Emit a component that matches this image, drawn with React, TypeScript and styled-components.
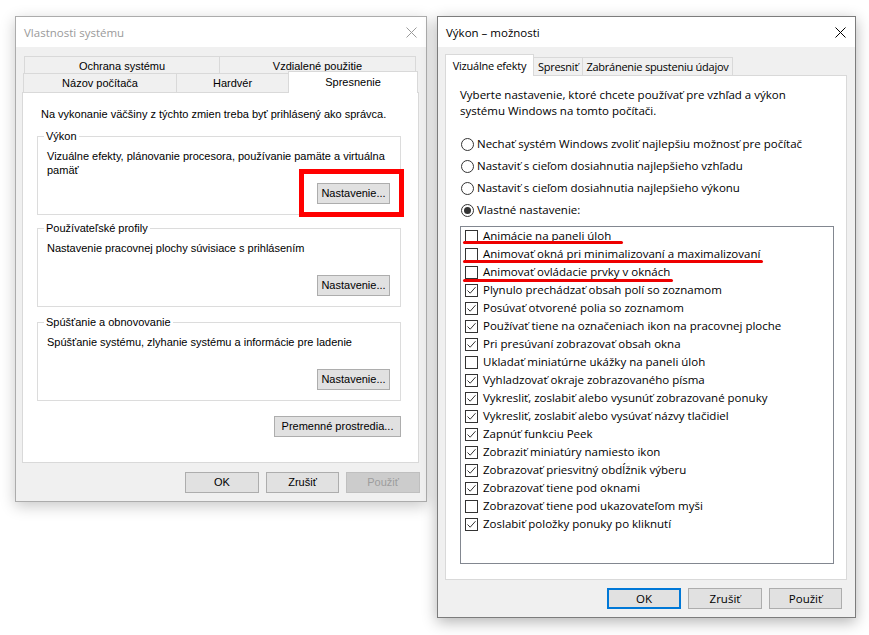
import React from 'react';
import styled, { createGlobalStyle, css } from 'styled-components';

const Global = createGlobalStyle`
  html, body { margin: 0; padding: 0; background: #ffffff; overflow: hidden; }
  body { font-family: "Liberation Sans", Arial, sans-serif; }
`;

const Desktop = styled.div`
  box-sizing: border-box;
  width: 869px;
  height: 635px;
  display: flex;
  align-items: flex-start;
  gap: 10px;
  padding: 16px 0 0 15px;
`;

const Window = styled.div<{ $w: number; $h: number; $active?: boolean }>`
  box-sizing: border-box;
  width: ${(p) => p.$w}px;
  height: ${(p) => p.$h}px;
  flex: none;
  display: flex;
  flex-direction: column;
  background: #f0f0f0;
  border: 1px solid ${(p) => (p.$active ? '#7c7c7c' : '#acacac')};
  box-shadow: 0 4px 14px rgba(0, 0, 0, ${(p) => (p.$active ? 0.3 : 0.22)});
`;

const TitleBar = styled.div<{ $active?: boolean }>`
  height: 30px;
  flex: none;
  background: #ffffff;
  display: flex;
  align-items: center;
  justify-content: space-between;
  padding: 0 9px 0 8px;
  font: 11.5px "Open Sans", "Noto Sans", sans-serif;
  color: ${(p) => (p.$active ? '#000000' : '#9a9a9a')};
`;

const Body = styled.div<{ $ui: 'classic' | 'modern' }>`
  flex: 1;
  display: flex;
  flex-direction: column;
  padding: ${(p) => (p.$ui === 'classic' ? '9px 6px 0 6px' : '7px 7px 0 7px')};
  color: #000;
  ${(p) =>
    p.$ui === 'classic'
      ? css`font: 11px/13px "Liberation Sans", Arial, sans-serif;`
      : css`font: 11.5px/16px "Open Sans", "Noto Sans", sans-serif;`}
`;

const TabStrip = styled.div`
  display: flex;
  flex-direction: column;
`;

const TabRow = styled.div<{ $h: number; $indent: number }>`
  display: flex;
  align-items: flex-end;
  height: ${(p) => p.$h}px;
  padding-left: ${(p) => p.$indent}px;
`;

const Tab = styled.div<{ $w: number; $h: number; $selected?: boolean; $dy?: number; $tight?: boolean }>`
  box-sizing: border-box;
  flex: none;
  width: ${(p) => p.$w}px;
  height: ${(p) => p.$h}px;
  border: 1px solid #d9d9d9;
  border-bottom: none;
  background: ${(p) => (p.$selected ? '#ffffff' : '#f0f0f0')};
  display: flex;
  align-items: center;
  justify-content: center;
  padding-top: ${(p) => p.$dy ?? 0}px;
  white-space: nowrap;
  ${(p) =>
    p.$tight &&
    css`
      font-size: 11px;
      letter-spacing: -0.25px;
    `}
  & + & {
    margin-left: -1px;
  }
  ${(p) =>
    p.$selected &&
    css`
      position: relative;
      z-index: 1;
      margin-bottom: -1px;
    `}
`;

const Panel = styled.div<{ $w: number; $h: number; $pad: string }>`
  box-sizing: border-box;
  width: ${(p) => p.$w}px;
  height: ${(p) => p.$h}px;
  flex: none;
  background: #ffffff;
  border: 1px solid #d9d9d9;
  display: flex;
  flex-direction: column;
  padding: ${(p) => p.$pad};
`;

const Intro = styled.p<{ $ml: number }>`
  margin: 0 0 0 ${(p) => p.$ml}px;
`;

const Group = styled.fieldset<{ $mt: number }>`
  margin: ${(p) => p.$mt}px 0 0 0;
  padding: 0 10px 10px 9px;
  border: 1px solid #dcdcdc;
  min-width: 0;
`;

const Legend = styled.legend`
  padding: 0 2px;
  margin-left: -3px;
  line-height: 13px;
`;

const GroupBody = styled.div`
  height: 55px;
  padding-top: 6px;
  display: flex;
  flex-direction: column;
  justify-content: space-between;
`;

const GroupText = styled.div`
  line-height: 14px;
`;

const RightAlign = styled.div<{ $mt?: number }>`
  display: flex;
  justify-content: flex-end;
  margin-top: ${(p) => p.$mt ?? 0}px;
`;

const Highlight = styled.span`
  position: relative;
  display: inline-flex;
  &::after {
    content: '';
    position: absolute;
    top: -14px;
    right: -14px;
    bottom: -13px;
    left: -18px;
    border: 5px solid #ff0000;
    pointer-events: none;
  }
`;

const Button = styled.button<{ $w: number; $isDefault?: boolean }>`
  box-sizing: border-box;
  flex: none;
  width: ${(p) => p.$w}px;
  height: 21px;
  padding: 0;
  margin: 0;
  font: inherit;
  line-height: 1;
  color: #000;
  background: #e1e1e1;
  border: 1px solid #adadad;
  border-radius: 0;
  ${(p) =>
    p.$isDefault &&
    css`
      border: 2px solid #0078d7;
    `}
  &:disabled {
    background: #cccccc;
    border-color: #bfbfbf;
    color: #9d9d9d;
  }
`;

const Footer = styled.div<{ $pt: number; $pr: number }>`
  display: flex;
  justify-content: flex-end;
  gap: 7px;
  padding: ${(p) => p.$pt}px ${(p) => p.$pr}px 0 0;
`;

const RadioGroup = styled.div`
  display: flex;
  flex-direction: column;
  margin-top: 14px;
`;

const RadioRow = styled.label`
  display: flex;
  align-items: center;
  height: 22px;
  gap: 3px;
  padding-left: 1px;
  white-space: nowrap;
`;

const RadioCircle = styled.span<{ $checked?: boolean }>`
  box-sizing: border-box;
  width: 13px;
  height: 13px;
  flex: none;
  border-radius: 50%;
  border: 1px solid #333333;
  background: #ffffff;
  display: inline-flex;
  align-items: center;
  justify-content: center;
  &::after {
    content: '';
    width: 7px;
    height: 7px;
    border-radius: 50%;
    background: #333333;
    display: ${(p) => (p.$checked ? 'block' : 'none')};
  }
`;

const ListBox = styled.div`
  box-sizing: border-box;
  width: 374px;
  height: 338px;
  margin-top: 5px;
  border: 1px solid #828790;
  background: #ffffff;
  display: flex;
  flex-direction: column;
`;

const ListRow = styled.div`
  position: relative;
  display: flex;
  align-items: center;
  height: 18px;
  flex: none;
  gap: 5px;
  padding-left: 4px;
  white-space: nowrap;
`;

const CheckBox = styled.span`
  box-sizing: border-box;
  width: 13px;
  height: 13px;
  flex: none;
  border: 1px solid #333333;
  background: #ffffff;
  display: inline-flex;
  align-items: center;
  justify-content: center;
`;

const Underline = styled.span<{ $w: number; $top: number }>`
  position: absolute;
  left: 2px;
  top: ${(p) => p.$top}px;
  width: ${(p) => p.$w}px;
  height: 3px;
  border-radius: 2px;
  background: #ee0000;
`;

const CloseIcon = ({ color }: { color: string }) => (
  <svg width="11" height="11" viewBox="0 0 11 11" aria-hidden>
    <path d="M0.5 0.5L10.5 10.5M10.5 0.5L0.5 10.5" stroke={color} strokeWidth="1" fill="none" />
  </svg>
);

const CheckMark = () => (
  <svg width="11" height="11" viewBox="0 0 11 11" aria-hidden>
    <path d="M1.5 5.5L4.2 8.2L9.5 2.2" stroke="#333333" strokeWidth="1" fill="none" />
  </svg>
);

const items: { label: string; checked: boolean; underline?: number; top?: number }[] = [
  { label: 'Animácie na paneli úloh', checked: false, underline: 160, top: 14 },
  { label: 'Animovať okná pri minimalizovaní a maximalizovaní', checked: false, underline: 300, top: 15 },
  { label: 'Animovať ovládacie prvky v oknách', checked: false, underline: 210, top: 16 },
  { label: 'Plynulo prechádzať obsah polí so zoznamom', checked: true },
  { label: 'Posúvať otvorené polia so zoznamom', checked: true },
  { label: 'Používať tiene na označeniach ikon na pracovnej ploche', checked: true },
  { label: 'Pri presúvaní zobrazovať obsah okna', checked: true },
  { label: 'Ukladať miniatúrne ukážky na paneli úloh', checked: false },
  { label: 'Vyhladzovať okraje zobrazovaného písma', checked: true },
  { label: 'Vykresliť, zoslabiť alebo vysunúť zobrazované ponuky', checked: true },
  { label: 'Vykresliť, zoslabiť alebo vysúvať názvy tlačidiel', checked: true },
  { label: 'Zapnúť funkciu Peek', checked: true },
  { label: 'Zobraziť miniatúry namiesto ikon', checked: true },
  { label: 'Zobrazovať priesvitný obdĺžnik výberu', checked: true },
  { label: 'Zobrazovať tiene pod oknami', checked: true },
  { label: 'Zobrazovať tiene pod ukazovateľom myši', checked: false },
  { label: 'Zoslabiť položky ponuky po kliknutí', checked: true },
];

const radios = [
  { label: 'Nechať systém Windows zvoliť najlepšiu možnosť pre počítač', checked: false },
  { label: 'Nastaviť s cieľom dosiahnutia najlepšieho vzhľadu', checked: false },
  { label: 'Nastaviť s cieľom dosiahnutia najlepšieho výkonu', checked: false },
  { label: 'Vlastné nastavenie:', checked: true },
];

export default function App() {
  return (
    <>
      <Global />
      <Desktop>
        <Window $w={412} $h={486}>
          <TitleBar>
            <span>Vlastnosti systému</span>
            <CloseIcon color="#9a9a9a" />
          </TitleBar>
          <Body $ui="classic">
            <TabStrip>
              <TabRow $h={17} $indent={2}>
                <Tab $w={196} $h={17} $dy={2}>Ochrana systému</Tab>
                <Tab $w={197} $h={17} $dy={2}>Vzdialené použitie</Tab>
              </TabRow>
              <TabRow $h={19} $indent={1}>
                <Tab $w={154} $h={19} $dy={1}>Názov počítača</Tab>
                <Tab $w={113} $h={19} $dy={1}>Hardvér</Tab>
                <Tab $w={130} $h={22} $selected>Spresnenie</Tab>
              </TabRow>
            </TabStrip>
            <Panel $w={397} $h={371} $pad="15px 17px 0 14px">
              <Intro $ml={4}>Na vykonanie väčšiny z týchto zmien treba byť prihlásený ako správca.</Intro>
              <Group $mt={9}>
                <Legend>Výkon</Legend>
                <GroupBody>
                  <GroupText>
                    Vizuálne efekty, plánovanie procesora, používanie pamäte a virtuálna
                    <br />
                    pamäť
                  </GroupText>
                  <RightAlign>
                    <Highlight>
                      <Button $w={73}>Nastavenie...</Button>
                    </Highlight>
                  </RightAlign>
                </GroupBody>
              </Group>
              <Group $mt={7}>
                <Legend>Používateľské profily</Legend>
                <GroupBody>
                  <GroupText>Nastavenie pracovnej plochy súvisiace s prihlásením</GroupText>
                  <RightAlign>
                    <Button $w={73}>Nastavenie...</Button>
                  </RightAlign>
                </GroupBody>
              </Group>
              <Group $mt={9}>
                <Legend>Spúšťanie a obnovovanie</Legend>
                <GroupBody>
                  <GroupText>Spúšťanie systému, zlyhanie systému a informácie pre ladenie</GroupText>
                  <RightAlign>
                    <Button $w={73}>Nastavenie...</Button>
                  </RightAlign>
                </GroupBody>
              </Group>
              <RightAlign $mt={15}>
                <Button $w={127}>Premenné prostredia...</Button>
              </RightAlign>
            </Panel>
            <Footer $pt={9} $pr={0}>
              <Button $w={74}>OK</Button>
              <Button $w={73}>Zrušiť</Button>
              <Button $w={74} disabled>
                Použiť
              </Button>
            </Footer>
          </Body>
        </Window>

        <Window $w={419} $h={602} $active>
          <TitleBar $active>
            <span>Výkon – možnosti</span>
            <CloseIcon color="#000000" />
          </TitleBar>
          <Body $ui="modern">
            <TabRow $h={21} $indent={0}>
              <Tab $w={89} $h={22} $selected $tight>
                Vizuálne efekty
              </Tab>
              <Tab $w={50} $h={18} $dy={1} $tight>
                Spresniť
              </Tab>
              <Tab $w={151} $h={18} $dy={1} $tight>
                Zabránenie spusteniu údajov
              </Tab>
            </TabRow>
            <Panel $w={402} $h={505} $pad="11px 0 0 14px">
              <Intro $ml={0}>
                Vyberte nastavenie, ktoré chcete používať pre vzhľad a výkon
                <br />
                systému Windows na tomto počítači.
              </Intro>
              <RadioGroup>
                {radios.map((r) => (
                  <RadioRow key={r.label}>
                    <RadioCircle $checked={r.checked} />
                    {r.label}
                  </RadioRow>
                ))}
              </RadioGroup>
              <ListBox>
                {items.map((it) => (
                  <ListRow key={it.label}>
                    <CheckBox>{it.checked && <CheckMark />}</CheckBox>
                    {it.label}
                    {it.underline && <Underline $w={it.underline} $top={it.top ?? 15} />}
                  </ListRow>
                ))}
              </ListBox>
            </Panel>
            <Footer $pt={8} $pr={6}>
              <Button $w={74} $isDefault>
                OK
              </Button>
              <Button $w={74}>Zrušiť</Button>
              <Button $w={73}>Použiť</Button>
            </Footer>
          </Body>
        </Window>
      </Desktop>
    </>
  );
}
